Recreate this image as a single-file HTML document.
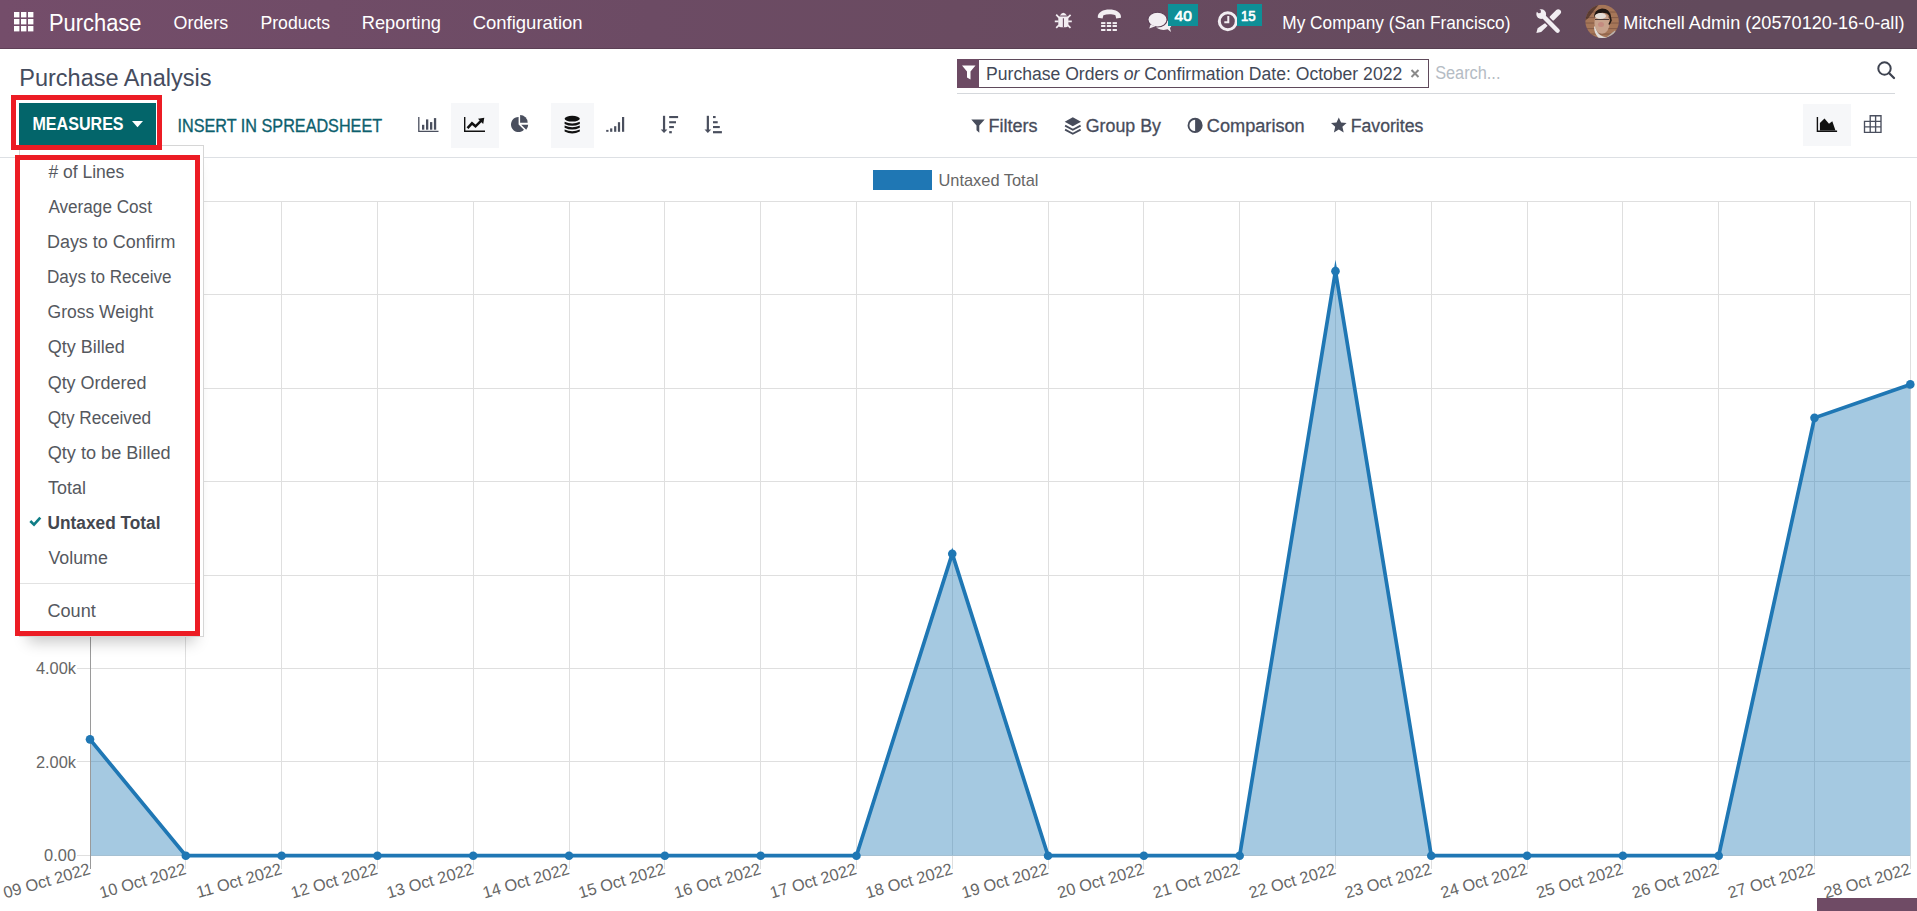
<!DOCTYPE html>
<html><head><meta charset="utf-8"><title>Purchase Analysis</title>
<style>
html,body{margin:0;padding:0;width:1917px;height:911px;overflow:hidden;background:#fff}
body{position:relative;font-family:"Liberation Sans",sans-serif}
.r{position:absolute;display:block}
svg.r{overflow:visible}
</style></head><body>
<div class="r" style="left:0px;top:0px;width:1917px;height:48px;background:linear-gradient(to right,#744d6a 0%,#6c4b64 34%,#6a4b61 50%,#624a5c 89%,#624a5c 100%)"></div>
<div class="r" style="left:0px;top:48px;width:1917px;height:1px;background:linear-gradient(to right,#5f3f57,#54404f)"></div>
<svg class="r" style="left:0;top:0" width="1917" height="911" font-family="'Liberation Sans', sans-serif"><rect x="14" y="12" width="5.4" height="5.4" fill="#fff"/><rect x="14" y="19" width="5.4" height="5.4" fill="#fff"/><rect x="14" y="26" width="5.4" height="5.4" fill="#fff"/><rect x="21" y="12" width="5.4" height="5.4" fill="#fff"/><rect x="21" y="19" width="5.4" height="5.4" fill="#fff"/><rect x="21" y="26" width="5.4" height="5.4" fill="#fff"/><rect x="28" y="12" width="5.4" height="5.4" fill="#fff"/><rect x="28" y="19" width="5.4" height="5.4" fill="#fff"/><rect x="28" y="26" width="5.4" height="5.4" fill="#fff"/><text x="48.95" y="31.10" font-size="23.0" fill="#ffffff" textLength="92.54" lengthAdjust="spacingAndGlyphs">Purchase</text><text x="173.59" y="29.00" font-size="18.2" fill="#ffffff" textLength="54.55" lengthAdjust="spacingAndGlyphs">Orders</text><text x="260.49" y="29.00" font-size="18.2" fill="#ffffff" textLength="69.54" lengthAdjust="spacingAndGlyphs">Products</text><text x="361.74" y="29.00" font-size="18.2" fill="#ffffff" textLength="79.29" lengthAdjust="spacingAndGlyphs">Reporting</text><text x="472.68" y="29.00" font-size="18.2" fill="#ffffff" textLength="109.96" lengthAdjust="spacingAndGlyphs">Configuration</text><g fill="#f2eef2"><path d="M1059.8 15.4 Q1063.35 10.2 1066.9 15.4 Z"/><path d="M1058.3 16.4 L1068.4 16.4 L1068.4 24.6 Q1068.4 27.2 1065.8 27.2 L1060.9 27.2 Q1058.3 27.2 1058.3 24.6 Z"/><path d="M1059 17.6 L1056.2 14.6 M1067.7 17.6 L1070.6 14.8 M1054.8 21.4 L1058.6 21.4 M1068.1 21.4 L1071.8 21.4 M1059 25.2 L1056.2 27.8 M1067.7 25.2 L1070.5 27.8" stroke="#f2eef2" stroke-width="1.7"/></g><path d="M1063.4 18.2 L1063.4 27.2" stroke="#6a4b61" stroke-width="1.1"/><path d="M1097.8 17.8 C1097.2 12.2 1103.5 9.6 1109.4 9.6 C1115.3 9.6 1121.6 12.2 1121 17.8 L1116.2 18.6 L1115.4 15.3 C1112 14 1106.8 14 1103.4 15.3 L1102.6 18.6 Z" fill="#f2eef2"/><rect x="1101.10" y="22.1" width="4.3" height="2" fill="#f2eef2"/><rect x="1101.10" y="25.0" width="4.3" height="2" fill="#f2eef2"/><rect x="1101.10" y="29.0" width="4.3" height="2" fill="#f2eef2"/><rect x="1106.85" y="22.1" width="4.3" height="2" fill="#f2eef2"/><rect x="1106.85" y="25.0" width="4.3" height="2" fill="#f2eef2"/><rect x="1106.85" y="29.0" width="4.3" height="2" fill="#f2eef2"/><rect x="1112.60" y="22.1" width="4.3" height="2" fill="#f2eef2"/><rect x="1112.60" y="25.0" width="4.3" height="2" fill="#f2eef2"/><rect x="1112.60" y="29.0" width="4.3" height="2" fill="#f2eef2"/><ellipse cx="1163.5" cy="25" rx="8" ry="5" fill="#f2eef2"/><path d="M1166 28 L1171 32 L1169.2 25.5 Z" fill="#f2eef2"/><ellipse cx="1157.5" cy="19.6" rx="9.6" ry="7.4" fill="#f2eef2" stroke="#5a3f55" stroke-width="1.1"/><path d="M1150.6 24.6 L1149.2 28.4 L1155.5 26.3 Z" fill="#f2eef2"/><g transform="translate(1217.5,10.5) scale(1,1)"><circle cx="10.3" cy="10.8" r="8.5" fill="none" stroke="#f2eef2" stroke-width="3"/><path d="M10.8 5.5 L10.8 11.8 L6.8 11.8" fill="none" stroke="#f2eef2" stroke-width="2"/></g></svg>
<div class="r" style="left:1168px;top:4px;width:30px;height:22px;background:#0e8f97"></div>
<div class="r" style="left:1237px;top:4px;width:25px;height:22px;background:#0e8f97"></div>
<svg class="r" style="left:0;top:0" width="1917" height="911" font-family="'Liberation Sans', sans-serif"><text x="1174.59" y="20.90" font-size="15.0" fill="#fff" stroke="#fff" stroke-width="0.7" textLength="17.27" lengthAdjust="spacingAndGlyphs">40</text><text x="1240.97" y="20.90" font-size="15.0" fill="#fff" stroke="#fff" stroke-width="0.7" textLength="14.70" lengthAdjust="spacingAndGlyphs">15</text><text x="1282.32" y="28.90" font-size="17.8" fill="#ffffff" textLength="228.09" lengthAdjust="spacingAndGlyphs">My Company (San Francisco)</text><g transform="translate(1536,8.5) scale(1,1)"><g fill="#f2eef2"><path d="M16.2 9.6 L22.2 3.6" stroke="#f2eef2" stroke-width="5.6" stroke-linecap="round"/><path d="M9.6 14.2 L12.2 16.8 L5.2 23.4 L0.4 24.4 L1.6 19.8 Z"/></g><path d="M5.6 6 L21.6 22.2" stroke="#644a5e" stroke-width="7.4" stroke-linecap="round"/><path d="M5.6 6 L21.6 22.2" stroke="#f2eef2" stroke-width="4.4" stroke-linecap="round"/><circle cx="5.2" cy="5.6" r="4.9" fill="#f2eef2"/><path d="M-0.5 1.8 L2.4 4.8 L4.6 4.4 L5 2.2 L2 -0.8 Z" fill="#644a5e"/></g><g transform="translate(1585,4.5) scale(1,1)"><defs><clipPath id="avc"><circle cx="17.1" cy="16.9" r="16.7"/></clipPath></defs><g clip-path="url(#avc)"><rect x="0" y="0" width="35" height="35" fill="#a67658"/><rect x="0" y="7" width="35" height="1.1" fill="#6f4b3c" fill-opacity="0.55"/><rect x="0" y="12.5" width="35" height="1.1" fill="#6f4b3c" fill-opacity="0.55"/><rect x="0" y="18" width="35" height="1.1" fill="#6f4b3c" fill-opacity="0.55"/><rect x="0" y="23.5" width="35" height="1.1" fill="#6f4b3c" fill-opacity="0.55"/><rect x="0" y="29" width="35" height="1.1" fill="#6f4b3c" fill-opacity="0.55"/><path d="M0 0 L14 0 L9 6 L3 14 L0 16 Z" fill="#4a3028" fill-opacity="0.8"/><ellipse cx="17" cy="18.5" rx="7.6" ry="10.8" fill="#c8a28c"/><path d="M9 13 Q9 5 17 4 Q25 4 25.5 12 L22 9 Q16 7 11 10 Z" fill="#1f1713"/><path d="M24.5 9 L26 16 L24 20" stroke="#1f1713" stroke-width="1.6" fill="none"/><ellipse cx="15.5" cy="11.5" rx="5.5" ry="3" fill="#e4ddd6"/><path d="M10 15 L24 15" stroke="#4a3a36" stroke-width="1"/><ellipse cx="16" cy="20" rx="3" ry="2.5" fill="#c2827a" fill-opacity="0.7"/><path d="M10 22 Q12 30 18 32 L26 34 L14 34 Q9 29 9 22 Z" fill="#e0dcd8"/><path d="M20 34 L30 26 L34 34 Z" fill="#b9b5b2"/></g></g><text x="1623.36" y="28.90" font-size="17.8" fill="#ffffff" textLength="281.10" lengthAdjust="spacingAndGlyphs">Mitchell Admin (20570120-16-0-all)</text></svg>
<svg class="r" style="left:0;top:0" width="1917" height="911" font-family="'Liberation Sans', sans-serif"><text x="19.23" y="85.80" font-size="23.5" fill="#454c5e" textLength="192.27" lengthAdjust="spacingAndGlyphs">Purchase Analysis</text></svg>
<div class="r" style="left:957px;top:59px;width:472px;height:29px;border:1px solid #5f4a5b;box-sizing:border-box;background:#fff"></div>
<div class="r" style="left:957px;top:59px;width:22px;height:29px;background:#6c4a63"></div>
<svg class="r" style="left:0;top:0" width="1917" height="911" font-family="'Liberation Sans', sans-serif"><path d="M962 65.5 L975.5 65.5 L970.5 71.5 L970.5 79.5 L967 77.5 L967 71.5 Z" fill="#fff"/><text x="986.09" y="79.50" font-size="18.0" fill="#424857" textLength="416.12" lengthAdjust="spacingAndGlyphs">Purchase Orders <tspan font-style="italic">or</tspan> Confirmation Date: October 2022</text><path d="M1411.5 70 L1418.5 77 M1418.5 70 L1411.5 77" stroke="#8a8a8a" stroke-width="2"/><text x="1435.15" y="78.90" font-size="18.0" fill="#b5bcc4" textLength="65.29" lengthAdjust="spacingAndGlyphs">Search...</text><circle cx="1884.5" cy="68.5" r="6.2" fill="none" stroke="#3e4350" stroke-width="2"/><path d="M1889 73 L1894 78" stroke="#3e4350" stroke-width="2.3" stroke-linecap="round"/></svg>
<div class="r" style="left:957px;top:93px;width:938px;height:1px;background:#d5d8dc"></div>
<div class="r" style="left:19px;top:103px;width:137px;height:42px;background:#03656a"></div>
<svg class="r" style="left:0;top:0" width="1917" height="911" font-family="'Liberation Sans', sans-serif"><text x="32.43" y="129.90" font-size="18.0" fill="#fff" font-weight="700" textLength="91.16" lengthAdjust="spacingAndGlyphs">MEASURES</text><path d="M132 121 L143 121 L137.5 127.2 Z" fill="#fff"/><text x="177.54" y="132.20" font-size="18.2" fill="#0d5f6e" stroke="#0d5f6e" stroke-width="0.35" textLength="204.59" lengthAdjust="spacingAndGlyphs">INSERT IN SPREADSHEET</text></svg>
<div class="r" style="left:451px;top:103px;width:48px;height:45px;background:#f6f7f9"></div>
<div class="r" style="left:551px;top:103px;width:43px;height:45px;background:#f6f7f9"></div>
<svg class="r" style="left:0;top:0" width="1917" height="911" font-family="'Liberation Sans', sans-serif"><g transform="translate(417.5,117) scale(1,1)"><path d="M1.3 0 L1.3 14.3 L21 14.3" fill="none" stroke="#4a4f5e" stroke-width="1.3"/><rect x="4.5" y="7.8" width="2.3" height="4.9" fill="#4a4f5e"/><rect x="8.5" y="2.4" width="2.3" height="10.3" fill="#4a4f5e"/><rect x="12.5" y="5.1" width="2.3" height="7.6" fill="#4a4f5e"/><rect x="16.4" y="1.1" width="2.3" height="11.6" fill="#4a4f5e"/></g><g transform="translate(464,117) scale(1,1)"><path d="M0.7 0 L0.7 14.3 L21 14.3" fill="none" stroke="#111" stroke-width="1.4"/><path d="M3.5 11.2 L8 6.3 L11.5 9.3 L17.5 3.3" fill="none" stroke="#111" stroke-width="2.5"/><path d="M14 1.8 L20.3 0.7 L19.2 7 Z" fill="#111"/></g><g transform="translate(510.9,115.4) scale(1,1)"><path d="M7.7 9.1 L13.07 14.47 A7.6 7.6 0 1 1 7.7 1.5 Z" fill="#4a4f5e"/><path d="M9.2 7.3 L9.2 -0.3 A7.6 7.6 0 0 1 16.8 7.3 Z" fill="#4a4f5e"/><path d="M10.3 9.4 L17.3 9.4 A7.2 7.2 0 0 1 15.3 14.3 Z" fill="#4a4f5e"/></g><g transform="translate(564.6,115.4) scale(1,1)"><ellipse cx="7.6" cy="3.3" rx="7.6" ry="2.9" fill="#111"/><path d="M0 6.30 Q7.6 9.90 15.2 6.30 L15.2 8.50 Q7.6 12.20 0 8.50 Z" fill="#111"/><path d="M0 10.15 Q7.6 13.75 15.2 10.15 L15.2 12.35 Q7.6 16.05 0 12.35 Z" fill="#111"/><path d="M0 14.00 Q7.6 17.60 15.2 14.00 L15.2 16.20 Q7.6 19.90 0 16.20 Z" fill="#111"/></g><g transform="translate(605.7,116.6) scale(1,1)"><rect x="0.5" y="13.3" width="2.3" height="1.9" fill="#4a4f5e"/><rect x="4.4" y="11.8" width="2.2" height="3.4" fill="#4a4f5e"/><rect x="8.4" y="9.6" width="2.2" height="5.6" fill="#4a4f5e"/><rect x="12.2" y="5.6" width="2.2" height="9.6" fill="#4a4f5e"/><rect x="16.3" y="0.4" width="2.2" height="14.8" fill="#4a4f5e"/></g><g transform="translate(660.4,115.4) scale(1,1)"><rect x="2.55" y="0.4" width="2.2" height="14.4" fill="#4a4f5e"/><path d="M0.3 14.2 L7 14.2 L3.65 17.6 Z" fill="#4a4f5e"/><rect x="8.8" y="0.6" width="8.9" height="2.1" fill="#4a4f5e"/><rect x="8.8" y="5.8" width="6.8" height="2.1" fill="#4a4f5e"/><rect x="8.8" y="10.6" width="4.7" height="2.1" fill="#4a4f5e"/><rect x="8.8" y="15.7" width="2.6" height="2.2" fill="#4a4f5e"/></g><g transform="translate(704.2,115.4) scale(1,1)"><rect x="2.55" y="0.4" width="2.2" height="14.4" fill="#4a4f5e"/><path d="M0.3 14.2 L7 14.2 L3.65 17.6 Z" fill="#4a4f5e"/><rect x="8.8" y="0.6" width="2.6" height="2.1" fill="#4a4f5e"/><rect x="8.8" y="5.8" width="4.7" height="2.1" fill="#4a4f5e"/><rect x="8.8" y="10.6" width="6.8" height="2.1" fill="#4a4f5e"/><rect x="8.8" y="15.7" width="8.9" height="2.2" fill="#4a4f5e"/></g><g transform="translate(971,119) scale(1,1)"><path d="M0.3 0.6 L13.7 0.6 L8.3 6.5 L8.3 13.8 L5.5 11.2 L5.5 6.5 Z" fill="#474c5b"/></g><g transform="translate(1064.5,117) scale(1,1)"><path d="M8.3 0.3 L16.5 4.8 L8.3 9.3 L0.2 4.8 Z" fill="#474c5b"/><path d="M0.6 8.6 L8.3 12.8 L16.1 8.6" fill="none" stroke="#474c5b" stroke-width="1.8"/><path d="M0.6 12.6 L8.3 16.8 L16.1 12.6" fill="none" stroke="#474c5b" stroke-width="1.8"/></g><g transform="translate(1187.5,118) scale(1,1)"><circle cx="7.6" cy="7.4" r="6.6" fill="none" stroke="#474c5b" stroke-width="1.9"/><path d="M7.6 0.8 A6.6 6.6 0 0 1 7.6 14 Z" fill="#474c5b"/></g><g transform="translate(1330.8,117.2) scale(1,1)"><path d="M8 0.3 L10.3 5.4 L15.8 5.9 L11.6 9.6 L12.9 15.2 L8 12.3 L3.1 15.2 L4.4 9.6 L0.2 5.9 L5.7 5.4 Z" fill="#474c5b"/></g><text x="988.56" y="131.70" font-size="18.0" fill="#474c5b" stroke="#474c5b" stroke-width="0.3" textLength="48.98" lengthAdjust="spacingAndGlyphs">Filters</text><text x="1085.81" y="131.70" font-size="18.0" fill="#474c5b" stroke="#474c5b" stroke-width="0.3" textLength="75.09" lengthAdjust="spacingAndGlyphs">Group By</text><text x="1206.89" y="131.70" font-size="18.0" fill="#474c5b" stroke="#474c5b" stroke-width="0.3" textLength="97.83" lengthAdjust="spacingAndGlyphs">Comparison</text><text x="1350.79" y="131.70" font-size="18.0" fill="#474c5b" stroke="#474c5b" stroke-width="0.3" textLength="72.54" lengthAdjust="spacingAndGlyphs">Favorites</text></svg>
<div class="r" style="left:1803px;top:104px;width:48px;height:42px;background:#f6f7f9"></div>
<svg class="r" style="left:0;top:0" width="1917" height="911" font-family="'Liberation Sans', sans-serif"><g transform="translate(1816.7,117) scale(1,1)"><path d="M0.7 0 L0.7 14.3 L20.4 14.3" fill="none" stroke="#111" stroke-width="1.4"/><path d="M3.2 13.4 L3.2 6 L7.8 1.5 L12.3 6.8 L15.6 4.2 L18.8 13.4 Z" fill="#111"/></g><g transform="translate(1863.8,115) scale(1,1)"><g fill="none" stroke="#4a4f5e" stroke-width="1.35"><path d="M6.4 6.3 L6.4 0.7 L17.2 0.7 L17.2 17.3 L0.7 17.3 L0.7 6.3 L17.2 6.3 M0.7 11.8 L17.2 11.8 M6.4 6.3 L6.4 17.3 M11.8 0.7 L11.8 17.3"/></g></g></svg>
<div class="r" style="left:0px;top:157px;width:1917px;height:1px;background:#dde0e4"></div>
<svg class="r" style="left:0;top:0" width="1917" height="911" font-family="'Liberation Sans', sans-serif"><line x1="77" y1="855.5" x2="1910.8" y2="855.5" stroke="#dfdfdf" stroke-width="1"/><line x1="77" y1="761.5" x2="1910.8" y2="761.5" stroke="#dfdfdf" stroke-width="1"/><line x1="77" y1="668.5" x2="1910.8" y2="668.5" stroke="#dfdfdf" stroke-width="1"/><line x1="77" y1="575.5" x2="1910.8" y2="575.5" stroke="#dfdfdf" stroke-width="1"/><line x1="77" y1="481.5" x2="1910.8" y2="481.5" stroke="#dfdfdf" stroke-width="1"/><line x1="77" y1="388.5" x2="1910.8" y2="388.5" stroke="#dfdfdf" stroke-width="1"/><line x1="77" y1="294.5" x2="1910.8" y2="294.5" stroke="#dfdfdf" stroke-width="1"/><line x1="77" y1="201.5" x2="1910.8" y2="201.5" stroke="#dfdfdf" stroke-width="1"/><line x1="185.5" y1="201" x2="185.5" y2="869" stroke="#dfdfdf" stroke-width="1"/><line x1="281.5" y1="201" x2="281.5" y2="869" stroke="#dfdfdf" stroke-width="1"/><line x1="377.5" y1="201" x2="377.5" y2="869" stroke="#dfdfdf" stroke-width="1"/><line x1="473.5" y1="201" x2="473.5" y2="869" stroke="#dfdfdf" stroke-width="1"/><line x1="569.5" y1="201" x2="569.5" y2="869" stroke="#dfdfdf" stroke-width="1"/><line x1="664.5" y1="201" x2="664.5" y2="869" stroke="#dfdfdf" stroke-width="1"/><line x1="760.5" y1="201" x2="760.5" y2="869" stroke="#dfdfdf" stroke-width="1"/><line x1="856.5" y1="201" x2="856.5" y2="869" stroke="#dfdfdf" stroke-width="1"/><line x1="952.5" y1="201" x2="952.5" y2="869" stroke="#dfdfdf" stroke-width="1"/><line x1="1048.5" y1="201" x2="1048.5" y2="869" stroke="#dfdfdf" stroke-width="1"/><line x1="1143.5" y1="201" x2="1143.5" y2="869" stroke="#dfdfdf" stroke-width="1"/><line x1="1239.5" y1="201" x2="1239.5" y2="869" stroke="#dfdfdf" stroke-width="1"/><line x1="1335.5" y1="201" x2="1335.5" y2="869" stroke="#dfdfdf" stroke-width="1"/><line x1="1431.5" y1="201" x2="1431.5" y2="869" stroke="#dfdfdf" stroke-width="1"/><line x1="1527.5" y1="201" x2="1527.5" y2="869" stroke="#dfdfdf" stroke-width="1"/><line x1="1622.5" y1="201" x2="1622.5" y2="869" stroke="#dfdfdf" stroke-width="1"/><line x1="1718.5" y1="201" x2="1718.5" y2="869" stroke="#dfdfdf" stroke-width="1"/><line x1="1814.5" y1="201" x2="1814.5" y2="869" stroke="#dfdfdf" stroke-width="1"/><line x1="1910.5" y1="201" x2="1910.5" y2="869" stroke="#dfdfdf" stroke-width="1"/><polygon points="90.00,855.6999999999999 90.00,739.37 185.81,855.70 281.61,855.70 377.42,855.70 473.22,855.70 569.03,855.70 664.83,855.70 760.64,855.70 856.44,855.70 952.25,553.74 1048.05,855.70 1143.86,855.70 1239.66,855.70 1335.47,271.16 1431.27,855.70 1527.08,855.70 1622.88,855.70 1718.69,855.70 1814.49,417.84 1910.30,384.40 1910.30,855.6999999999999" fill="rgba(31,119,180,0.4)"/><line x1="90.5" y1="201" x2="90.5" y2="869" stroke="#9a9a9a" stroke-width="1"/><polyline points="90.00,739.37 185.81,855.70 281.61,855.70 377.42,855.70 473.22,855.70 569.03,855.70 664.83,855.70 760.64,855.70 856.44,855.70 952.25,553.74 1048.05,855.70 1143.86,855.70 1239.66,855.70 1335.47,271.16 1431.27,855.70 1527.08,855.70 1622.88,855.70 1718.69,855.70 1814.49,417.84 1910.30,384.40" fill="none" stroke="#1f77b4" stroke-width="3.7" stroke-linejoin="miter" stroke-miterlimit="10"/><circle cx="90.00" cy="739.37" r="4.3" fill="#1f77b4"/><circle cx="185.81" cy="855.70" r="4.3" fill="#1f77b4"/><circle cx="281.61" cy="855.70" r="4.3" fill="#1f77b4"/><circle cx="377.42" cy="855.70" r="4.3" fill="#1f77b4"/><circle cx="473.22" cy="855.70" r="4.3" fill="#1f77b4"/><circle cx="569.03" cy="855.70" r="4.3" fill="#1f77b4"/><circle cx="664.83" cy="855.70" r="4.3" fill="#1f77b4"/><circle cx="760.64" cy="855.70" r="4.3" fill="#1f77b4"/><circle cx="856.44" cy="855.70" r="4.3" fill="#1f77b4"/><circle cx="952.25" cy="553.74" r="4.3" fill="#1f77b4"/><circle cx="1048.05" cy="855.70" r="4.3" fill="#1f77b4"/><circle cx="1143.86" cy="855.70" r="4.3" fill="#1f77b4"/><circle cx="1239.66" cy="855.70" r="4.3" fill="#1f77b4"/><circle cx="1335.47" cy="271.16" r="4.3" fill="#1f77b4"/><circle cx="1431.27" cy="855.70" r="4.3" fill="#1f77b4"/><circle cx="1527.08" cy="855.70" r="4.3" fill="#1f77b4"/><circle cx="1622.88" cy="855.70" r="4.3" fill="#1f77b4"/><circle cx="1718.69" cy="855.70" r="4.3" fill="#1f77b4"/><circle cx="1814.49" cy="417.84" r="4.3" fill="#1f77b4"/><circle cx="1910.30" cy="384.40" r="4.3" fill="#1f77b4"/><text x="76" y="861" text-anchor="end" font-size="16.4" fill="#666">0.00</text><text x="76" y="768" text-anchor="end" font-size="16.4" fill="#666">2.00k</text><text x="76" y="674" text-anchor="end" font-size="16.4" fill="#666">4.00k</text><text x="76" y="581" text-anchor="end" font-size="16.4" fill="#666">6.00k</text><text x="76" y="488" text-anchor="end" font-size="16.4" fill="#666">8.00k</text><text x="76" y="394" text-anchor="end" font-size="16.4" fill="#666">10.00k</text><text x="76" y="301" text-anchor="end" font-size="16.4" fill="#666">12.00k</text><text x="76" y="207" text-anchor="end" font-size="16.4" fill="#666">14.00k</text><text transform="translate(87.90,862.3) rotate(-16)" text-anchor="end" dominant-baseline="hanging" font-size="16.4" fill="#666">09 Oct 2022</text><text transform="translate(183.71,862.3) rotate(-16)" text-anchor="end" dominant-baseline="hanging" font-size="16.4" fill="#666">10 Oct 2022</text><text transform="translate(279.51,862.3) rotate(-16)" text-anchor="end" dominant-baseline="hanging" font-size="16.4" fill="#666">11 Oct 2022</text><text transform="translate(375.32,862.3) rotate(-16)" text-anchor="end" dominant-baseline="hanging" font-size="16.4" fill="#666">12 Oct 2022</text><text transform="translate(471.12,862.3) rotate(-16)" text-anchor="end" dominant-baseline="hanging" font-size="16.4" fill="#666">13 Oct 2022</text><text transform="translate(566.93,862.3) rotate(-16)" text-anchor="end" dominant-baseline="hanging" font-size="16.4" fill="#666">14 Oct 2022</text><text transform="translate(662.73,862.3) rotate(-16)" text-anchor="end" dominant-baseline="hanging" font-size="16.4" fill="#666">15 Oct 2022</text><text transform="translate(758.54,862.3) rotate(-16)" text-anchor="end" dominant-baseline="hanging" font-size="16.4" fill="#666">16 Oct 2022</text><text transform="translate(854.34,862.3) rotate(-16)" text-anchor="end" dominant-baseline="hanging" font-size="16.4" fill="#666">17 Oct 2022</text><text transform="translate(950.15,862.3) rotate(-16)" text-anchor="end" dominant-baseline="hanging" font-size="16.4" fill="#666">18 Oct 2022</text><text transform="translate(1045.95,862.3) rotate(-16)" text-anchor="end" dominant-baseline="hanging" font-size="16.4" fill="#666">19 Oct 2022</text><text transform="translate(1141.76,862.3) rotate(-16)" text-anchor="end" dominant-baseline="hanging" font-size="16.4" fill="#666">20 Oct 2022</text><text transform="translate(1237.56,862.3) rotate(-16)" text-anchor="end" dominant-baseline="hanging" font-size="16.4" fill="#666">21 Oct 2022</text><text transform="translate(1333.37,862.3) rotate(-16)" text-anchor="end" dominant-baseline="hanging" font-size="16.4" fill="#666">22 Oct 2022</text><text transform="translate(1429.17,862.3) rotate(-16)" text-anchor="end" dominant-baseline="hanging" font-size="16.4" fill="#666">23 Oct 2022</text><text transform="translate(1524.98,862.3) rotate(-16)" text-anchor="end" dominant-baseline="hanging" font-size="16.4" fill="#666">24 Oct 2022</text><text transform="translate(1620.78,862.3) rotate(-16)" text-anchor="end" dominant-baseline="hanging" font-size="16.4" fill="#666">25 Oct 2022</text><text transform="translate(1716.59,862.3) rotate(-16)" text-anchor="end" dominant-baseline="hanging" font-size="16.4" fill="#666">26 Oct 2022</text><text transform="translate(1812.39,862.3) rotate(-16)" text-anchor="end" dominant-baseline="hanging" font-size="16.4" fill="#666">27 Oct 2022</text><text transform="translate(1908.20,862.3) rotate(-16)" text-anchor="end" dominant-baseline="hanging" font-size="16.4" fill="#666">28 Oct 2022</text><rect x="873" y="170" width="59" height="20" fill="#1f77b4"/><text x="938.5" y="186" font-size="16.4" fill="#666">Untaxed Total</text></svg>
<div class="r" style="left:1817px;top:898px;width:100px;height:13px;background:#6f4b65"></div>
<div class="r" style="left:19px;top:145px;width:185px;height:492px;background:#fff;border:1px solid #d6d6d6;box-sizing:border-box;box-shadow:0 14px 14px -9px rgba(0,0,0,0.22)"></div>
<svg class="r" style="left:0;top:0" width="1917" height="911" font-family="'Liberation Sans', sans-serif"><text x="48.40" y="177.60" font-size="18.0" fill="#55585e" textLength="75.93" lengthAdjust="spacingAndGlyphs"># of Lines</text><text x="48.40" y="212.75" font-size="18.0" fill="#55585e" textLength="103.56" lengthAdjust="spacingAndGlyphs">Average Cost</text><text x="46.97" y="247.90" font-size="18.0" fill="#55585e" textLength="128.56" lengthAdjust="spacingAndGlyphs">Days to Confirm</text><text x="47.03" y="283.05" font-size="18.0" fill="#55585e" textLength="124.49" lengthAdjust="spacingAndGlyphs">Days to Receive</text><text x="47.52" y="318.20" font-size="18.0" fill="#55585e" textLength="105.74" lengthAdjust="spacingAndGlyphs">Gross Weight</text><text x="47.68" y="353.35" font-size="18.0" fill="#55585e" textLength="77.13" lengthAdjust="spacingAndGlyphs">Qty Billed</text><text x="47.68" y="388.50" font-size="18.0" fill="#55585e" textLength="98.73" lengthAdjust="spacingAndGlyphs">Qty Ordered</text><text x="47.71" y="423.65" font-size="18.0" fill="#55585e" textLength="103.36" lengthAdjust="spacingAndGlyphs">Qty Received</text><text x="47.67" y="458.80" font-size="18.0" fill="#55585e" textLength="122.94" lengthAdjust="spacingAndGlyphs">Qty to be Billed</text><text x="48.04" y="493.95" font-size="18.0" fill="#55585e" textLength="37.87" lengthAdjust="spacingAndGlyphs">Total</text><text x="47.56" y="529.10" font-size="18.0" fill="#44474f" font-weight="700" textLength="112.91" lengthAdjust="spacingAndGlyphs">Untaxed Total</text><text x="48.40" y="564.25" font-size="18.0" fill="#55585e" textLength="59.44" lengthAdjust="spacingAndGlyphs">Volume</text><path d="M30.3 521 L34 524.6 L40.3 517.6" fill="none" stroke="#0f7d86" stroke-width="2.7"/></svg>
<div class="r" style="left:20px;top:583px;width:175px;height:1px;background:#e2e2e2"></div>
<svg class="r" style="left:0;top:0" width="1917" height="911" font-family="'Liberation Sans', sans-serif"><text x="47.50" y="616.90" font-size="18.0" fill="#55585e" textLength="48.27" lengthAdjust="spacingAndGlyphs">Count</text></svg>
<div class="r" style="left:11px;top:95px;width:151px;height:55px;border:5px solid #ec1c24;box-sizing:border-box"></div>
<div class="r" style="left:15px;top:155px;width:185px;height:481px;border:5px solid #ec1c24;box-sizing:border-box"></div>
</body></html>
